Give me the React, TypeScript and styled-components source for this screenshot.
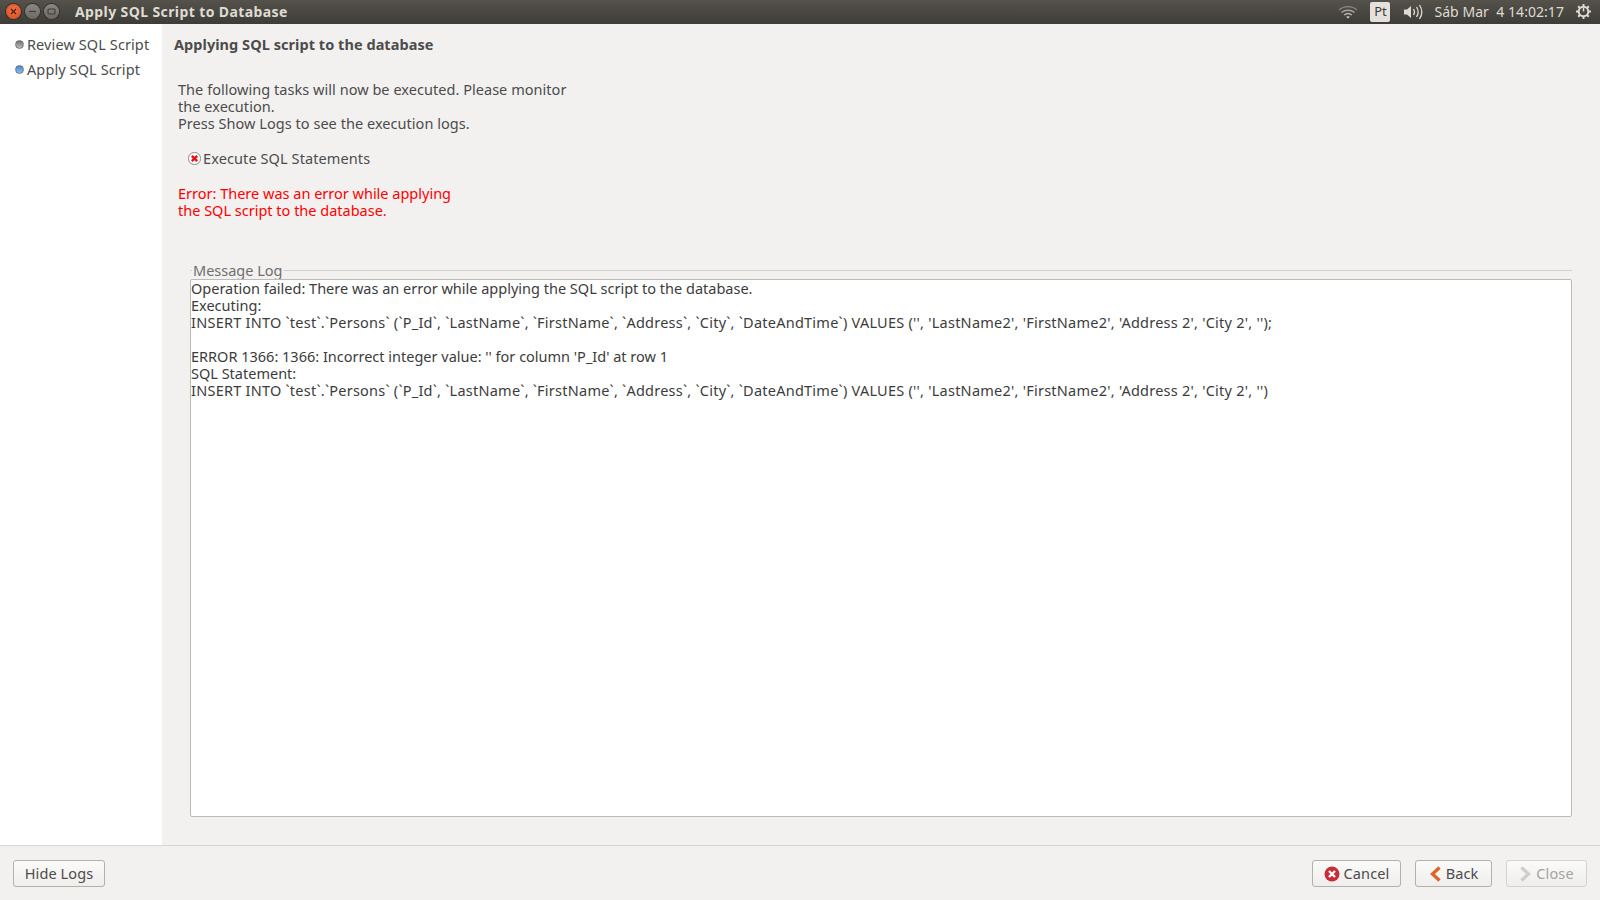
import React from "react";
import styled, { createGlobalStyle } from "styled-components";

const Global = createGlobalStyle`
  html, body, #root { margin: 0; padding: 0; height: 100%; }
  body {
    font-family: "Noto Sans", "Open Sans", sans-serif;
    font-size: 14.5px;
    line-height: 17px;
    color: #4c4c4c;
    background: #f2f1f0;
    overflow: hidden;
  }
`;

const Page = styled.div`
  width: 1600px;
  height: 900px;
  display: flex;
  flex-direction: column;
`;

const TopBar = styled.header`
  height: 24px;
  flex-shrink: 0;
  display: flex;
  align-items: center;
  padding: 0 0 1px 6px;
  box-sizing: border-box;
  background: linear-gradient(180deg, #55524b 0%, #3d3c37 100%);
`;

const WindowButtons = styled.div`
  display: flex;
  gap: 4px;
  width: 69px;
`;

const WindowButton = styled.span<{ $close?: boolean }>`
  width: 15px;
  height: 15px;
  border-radius: 50%;
  display: flex;
  align-items: center;
  justify-content: center;
  background: ${(p) =>
    p.$close
      ? "radial-gradient(circle at 50% 40%, #f0734a, #d9481c)"
      : "linear-gradient(180deg, #8a8880, #6b6962)"};
  box-shadow: 0 0 0 1px #33322e;
`;

const WindowTitle = styled.span`
  font-weight: 700;
  font-size: 14px;
  letter-spacing: 0.4px;
  color: #dfdbd2;
  flex: 1;
`;

const Tray = styled.div`
  display: flex;
  align-items: center;
  padding-right: 8px;
  color: #dfdbd2;
`;

const LangBadge = styled.span`
  width: 20px;
  height: 20px;
  margin: 0 13px 0 12px;
  border-radius: 2px;
  background: #e4e1dc;
  color: #3c3b37;
  font-size: 13px;
  display: flex;
  align-items: center;
  justify-content: center;
`;

const Clock = styled.span`
  font-size: 14px;
  letter-spacing: 0.05px;
  margin: 0 11px 0 10px;
  white-space: pre;
`;

const Body = styled.div`
  flex: 1;
  display: flex;
  min-height: 0;
`;

const Sidebar = styled.nav`
  width: 162px;
  flex-shrink: 0;
  background: #fff;
  padding: 12px 0 0 15px;
  box-sizing: border-box;
  display: flex;
  flex-direction: column;
  gap: 8px;
`;

const Step = styled.div`
  display: flex;
  align-items: center;
  gap: 3px;
  white-space: nowrap;
  letter-spacing: 0.1px;
`;

const StepDot = styled.span<{ $active?: boolean }>`
  width: 7px;
  height: 7px;
  border-radius: 50%;
  border: 1px solid #77767a;
  background: ${(p) =>
    p.$active
      ? "linear-gradient(180deg, #3f86d8, #8cc0f2)"
      : "linear-gradient(180deg, #6f6f6f, #bdbdbd)"};
`;

const Main = styled.main`
  flex: 1;
  min-width: 0;
  display: flex;
  flex-direction: column;
  padding: 12px 28px 28px 12px;
`;

const Heading = styled.div`
  font-weight: 700;
  letter-spacing: 0.05px;
`;

const Intro = styled.p`
  margin: 28px 0 0 4px;
  width: 400px;
  letter-spacing: 0.04px;
`;

const TaskRow = styled.div`
  margin: 18px 0 0 14px;
  display: flex;
  align-items: center;
  gap: 2px;
  letter-spacing: 0.1px;
`;

const ErrorText = styled.p`
  margin: 18px 0 0 4px;
  color: #ff0000;
`;

const LogFrame = styled.fieldset`
  flex: 1;
  min-height: 0;
  margin: 43px 0 0 16px;
  padding: 0;
  border: 0;
  border-top: 1px solid #d4d2ce;
  display: flex;
  flex-direction: column;
`;

const LogTitle = styled.legend`
  padding: 0 1px;
  margin-left: 2px;
  color: #6e6e6e;
`;

const LogBox = styled.div`
  flex: 1;
  height: 539px;
  box-sizing: border-box;
  background: #fff;
  border: 1px solid #bdbbb6;
  border-radius: 2px;
  padding: 0;
  color: #3c3c3c;
`;

const LogLine = styled.div<{ $spacing?: number }>`
  min-height: 17px;
  white-space: pre;
  letter-spacing: ${(p) => p.$spacing ?? 0}px;
`;

const Footer = styled.footer`
  height: 55px;
  flex-shrink: 0;
  box-sizing: border-box;
  border-top: 1px solid #d8d6d3;
  padding: 14px 13px 0;
  display: flex;
  align-items: flex-start;
`;

const Spacer = styled.div`
  flex: 1;
`;

const Button = styled.button<{ $w: number; $disabled?: boolean }>`
  width: ${(p) => p.$w}px;
  height: 27px;
  margin-left: 14px;
  padding: 0;
  font: inherit;
  letter-spacing: 0.12px;
  color: ${(p) => (p.$disabled ? "#a5a4a2" : "#4c4c4c")};
  border: 1px solid ${(p) => (p.$disabled ? "#d5d3cf" : "#b3b1ac")};
  border-radius: 3px;
  background: linear-gradient(180deg, #fafafa 0%, #efeeec 100%);
  display: flex;
  align-items: center;
  justify-content: center;
  gap: 4px;
  &:first-child {
    margin-left: 0;
  }
`;

const CloseGlyph = () => (
  <svg width="7" height="7" viewBox="0 0 7 7">
    <path d="M1 1l5 5M6 1L1 6" stroke="#4a1c0c" strokeWidth="1.1" />
  </svg>
);

const MinGlyph = () => (
  <svg width="9" height="9" viewBox="0 0 9 9">
    <path d="M1 4.5h7" stroke="#3c3b37" strokeWidth="1.2" />
  </svg>
);

const MaxGlyph = () => (
  <svg width="9" height="9" viewBox="0 0 9 9">
    <rect x="1" y="2" width="7" height="5" rx="1" fill="none" stroke="#3c3b37" strokeWidth="1.1" />
  </svg>
);

const WifiIcon = () => (
  <svg width="20" height="14" viewBox="0 0 20 14" fill="none" stroke="#bfbcb5" strokeWidth="1.3">
    <path d="M1 5c5-4.5 13-4.5 18 0" opacity=".55" />
    <path d="M3.5 7.5c3.6-3 9.4-3 13 0" opacity=".8" />
    <path d="M6.2 10c2.2-1.7 5.4-1.7 7.6 0" />
    <path d="M10 13.6l-1.8-1.8c1-.8 2.6-.8 3.6 0z" fill="#dfdbd2" stroke="none" />
  </svg>
);

const SoundIcon = () => (
  <svg width="21" height="16" viewBox="0 0 21 16" fill="none" stroke="#dfdbd2" strokeWidth="1.3">
    <path d="M1 5.5h3L8 2v12L4 10.5H1z" fill="#dfdbd2" stroke="none" />
    <path d="M10.5 5c1.2 1.8 1.2 4.2 0 6" />
    <path d="M13.5 3c2 3 2 7 0 10" />
    <path d="M16.5 1c2.8 4.2 2.8 9.8 0 14" />
  </svg>
);

const GearIcon = () => (
  <svg width="17" height="17" viewBox="0 0 17 17" fill="none" stroke="#dfdbd2">
    <circle cx="8.5" cy="8.5" r="4.8" strokeWidth="2" />
    <path d="M8.5 1v2.5M8.5 13.5V16M1 8.5h2.5M13.5 8.5H16M3.2 3.2L5 5M12 12l1.8 1.8M13.8 3.2L12 5M5 12l-1.8 1.8" strokeWidth="2" />
    <path d="M8.5 4.5v4" strokeWidth="1.5" />
  </svg>
);

const TaskErrorIcon = () => (
  <svg width="13" height="13" viewBox="0 0 13 13">
    <circle cx="6.5" cy="6.5" r="6.2" fill="#e4e4e4" stroke="#777" strokeWidth=".7" />
    <circle cx="6.5" cy="6.5" r="5" fill="#fff" />
    <path d="M3.8 3.8l5.4 5.4M9.2 3.8l-5.4 5.4" stroke="#e8101c" strokeWidth="2.4" />
  </svg>
);

const CancelIcon = () => (
  <svg width="16" height="16" viewBox="0 0 16 16">
    <circle cx="8" cy="8" r="7.5" fill="#cc2a36" />
    <path d="M5 5l6 6M11 5l-6 6" stroke="#fff" strokeWidth="2.4" />
  </svg>
);

const ChevronIcon = ({ dir, color }: { dir: "left" | "right"; color: string }) => (
  <svg width="13" height="16" viewBox="0 0 13 16" fill="none">
    <path
      d={dir === "left" ? "M10.5 1.5L3.5 8l7 6.5" : "M2.5 1.5L9.5 8l-7 6.5"}
      stroke={color}
      strokeWidth="3.4"
    />
  </svg>
);

const logLines: { text: string; spacing?: number }[] = [
  { text: "Operation failed: There was an error while applying the SQL script to the database." },
  { text: "Executing:" },
  {
    text: "INSERT INTO `test`.`Persons` (`P_Id`, `LastName`, `FirstName`, `Address`, `City`, `DateAndTime`) VALUES ('', 'LastName2', 'FirstName2', 'Address 2', 'City 2', '');",
    spacing: 0.245,
  },
  { text: "" },
  { text: "ERROR 1366: 1366: Incorrect integer value: '' for column 'P_Id' at row 1" },
  { text: "SQL Statement:" },
  {
    text: "INSERT INTO `test`.`Persons` (`P_Id`, `LastName`, `FirstName`, `Address`, `City`, `DateAndTime`) VALUES ('', 'LastName2', 'FirstName2', 'Address 2', 'City 2', '')",
    spacing: 0.245,
  },
];

export default function App() {
  return (
    <Page>
      <Global />
      <TopBar>
        <WindowButtons>
          <WindowButton $close>
            <CloseGlyph />
          </WindowButton>
          <WindowButton>
            <MinGlyph />
          </WindowButton>
          <WindowButton>
            <MaxGlyph />
          </WindowButton>
        </WindowButtons>
        <WindowTitle>Apply SQL Script to Database</WindowTitle>
        <Tray>
          <WifiIcon />
          <LangBadge>Pt</LangBadge>
          <SoundIcon />
          <Clock>Sáb Mar  4 14:02:17</Clock>
          <GearIcon />
        </Tray>
      </TopBar>
      <Body>
        <Sidebar>
          <Step>
            <StepDot />
            Review SQL Script
          </Step>
          <Step>
            <StepDot $active />
            Apply SQL Script
          </Step>
        </Sidebar>
        <Main>
          <Heading>Applying SQL script to the database</Heading>
          <Intro>
            The following tasks will now be executed. Please monitor
            <br />
            the execution.
            <br />
            Press Show Logs to see the execution logs.
          </Intro>
          <TaskRow>
            <TaskErrorIcon />
            Execute SQL Statements
          </TaskRow>
          <ErrorText>
            Error: There was an error while applying
            <br />
            the SQL script to the database.
          </ErrorText>
          <LogFrame>
            <LogTitle>Message Log</LogTitle>
            <LogBox>
              {logLines.map((line, i) => (
                <LogLine key={i} $spacing={line.spacing}>
                  {line.text}
                </LogLine>
              ))}
            </LogBox>
          </LogFrame>
        </Main>
      </Body>
      <Footer>
        <Button $w={92}>Hide Logs</Button>
        <Spacer />
        <Button $w={89}>
          <CancelIcon />
          Cancel
        </Button>
        <Button $w={77}>
          <ChevronIcon dir="left" color="#d9682a" />
          Back
        </Button>
        <Button $w={81} $disabled>
          <ChevronIcon dir="right" color="#cfcecb" />
          Close
        </Button>
      </Footer>
    </Page>
  );
}
